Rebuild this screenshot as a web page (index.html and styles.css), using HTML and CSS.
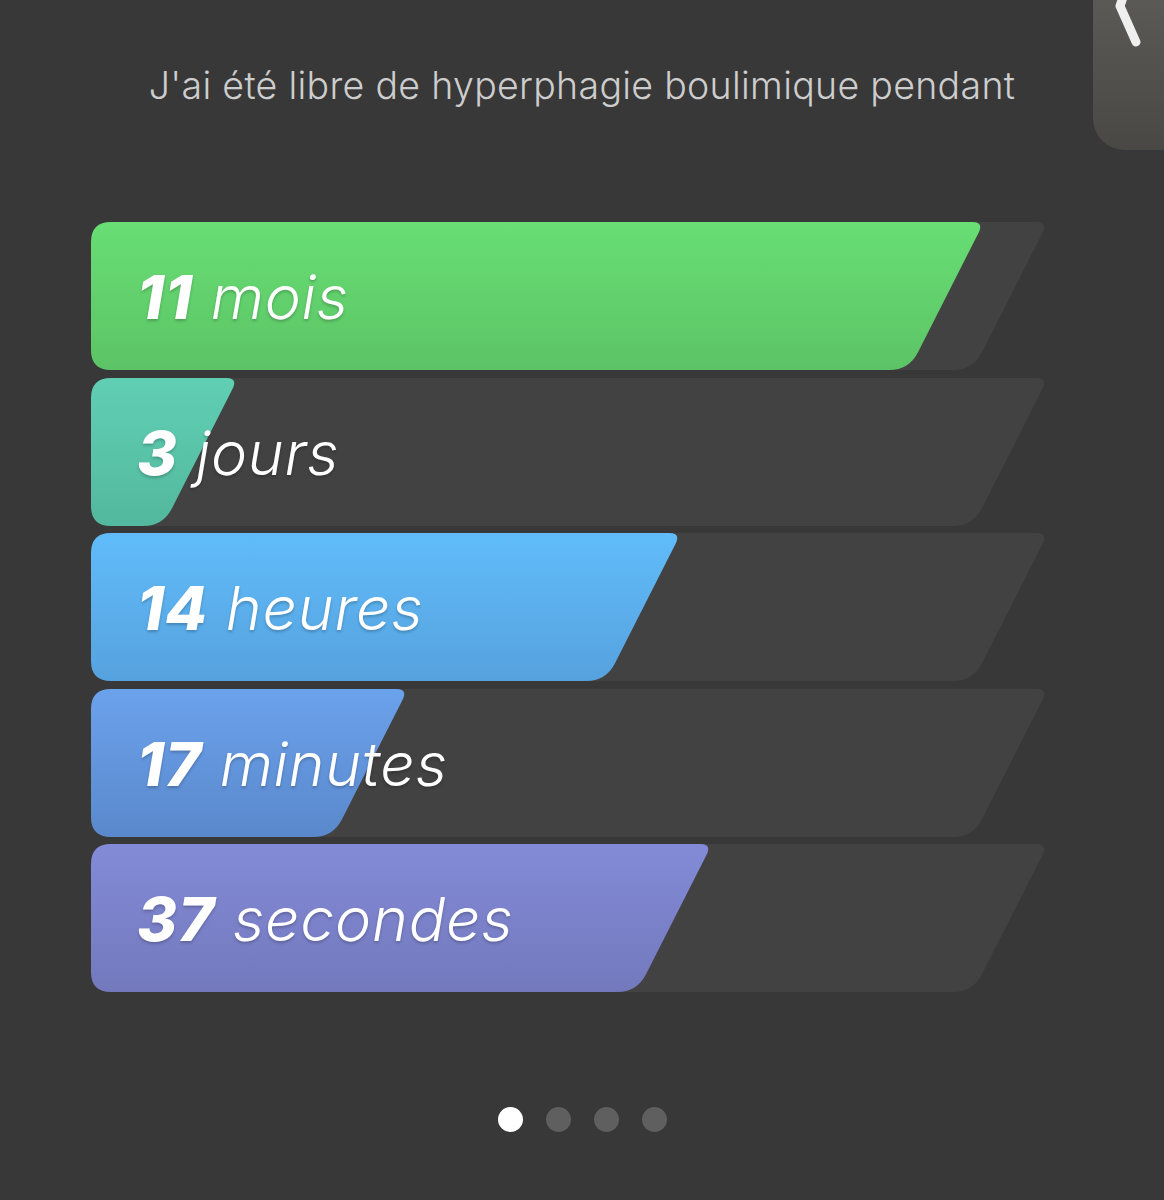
FILE: index.html
```html
<!DOCTYPE html>
<html lang="fr">
<head>
  <meta charset="UTF-8">
  <title>Compteur</title>
  <link rel="stylesheet" href="styles.css">
</head>
<body>

  <div class="tab">
    <svg width="71" height="150" viewBox="0 0 71 150">
      <path d="M34 -14 L27 6 L43 42" fill="none" stroke="#efefef" stroke-width="9" stroke-linecap="round" stroke-linejoin="round"/>
    </svg>
  </div>

  <div class="screen">
    <p class="title">J'ai été libre de hyperphagie boulimique pendant</p>

    <div class="bars">
      <div class="bar">
        <svg class="shape" viewBox="0 0 955 148">
          <defs>
            <linearGradient id="g1" x1="0" y1="0" x2="0" y2="1">
              <stop offset="0" stop-color="#68de74"/>
              <stop offset="1" stop-color="#5cc466"/>
            </linearGradient>
          </defs>
          <path class="track" d="M20 0 H945 Q957 0 951.6 10.7 L891 130.2 Q882 148 862 148 H20 Q0 148 0 128 V20 Q0 0 20 0 Z"/>
          <path fill="url(#g1)" d="M20 0 H881 Q893 0 887.6 10.7 L827 130.2 Q818 148 798 148 H20 Q0 148 0 128 V20 Q0 0 20 0 Z"/>
        </svg>
        <div class="label"><b>11</b> mois</div>
      </div>

      <div class="bar">
        <svg class="shape" viewBox="0 0 955 148">
          <defs>
            <linearGradient id="g2" x1="0" y1="0" x2="0" y2="1">
              <stop offset="0" stop-color="#60cfb4"/>
              <stop offset="1" stop-color="#53b89d"/>
            </linearGradient>
          </defs>
          <path class="track" d="M20 0 H945 Q957 0 951.6 10.7 L891 130.2 Q882 148 862 148 H20 Q0 148 0 128 V20 Q0 0 20 0 Z"/>
          <path fill="url(#g2)" d="M20 0 H135 Q147 0 141.6 10.7 L81 130.2 Q72 148 52 148 H20 Q0 148 0 128 V20 Q0 0 20 0 Z"/>
        </svg>
        <div class="label"><b>3</b> jours</div>
      </div>

      <div class="bar">
        <svg class="shape" viewBox="0 0 955 148">
          <defs>
            <linearGradient id="g3" x1="0" y1="0" x2="0" y2="1">
              <stop offset="0" stop-color="#60bcf9"/>
              <stop offset="1" stop-color="#56a2df"/>
            </linearGradient>
          </defs>
          <path class="track" d="M20 0 H945 Q957 0 951.6 10.7 L891 130.2 Q882 148 862 148 H20 Q0 148 0 128 V20 Q0 0 20 0 Z"/>
          <path fill="url(#g3)" d="M20 0 H578 Q590 0 584.6 10.7 L524 130.2 Q515 148 495 148 H20 Q0 148 0 128 V20 Q0 0 20 0 Z"/>
        </svg>
        <div class="label"><b>14</b> heures</div>
      </div>

      <div class="bar">
        <svg class="shape" viewBox="0 0 955 148">
          <defs>
            <linearGradient id="g4" x1="0" y1="0" x2="0" y2="1">
              <stop offset="0" stop-color="#6ba2ec"/>
              <stop offset="1" stop-color="#5a88cc"/>
            </linearGradient>
          </defs>
          <path class="track" d="M20 0 H945 Q957 0 951.6 10.7 L891 130.2 Q882 148 862 148 H20 Q0 148 0 128 V20 Q0 0 20 0 Z"/>
          <path fill="url(#g4)" d="M20 0 H305 Q317 0 311.6 10.7 L251 130.2 Q242 148 222 148 H20 Q0 148 0 128 V20 Q0 0 20 0 Z"/>
        </svg>
        <div class="label"><b>17</b> minutes</div>
      </div>

      <div class="bar">
        <svg class="shape" viewBox="0 0 955 148">
          <defs>
            <linearGradient id="g5" x1="0" y1="0" x2="0" y2="1">
              <stop offset="0" stop-color="#838bd8"/>
              <stop offset="1" stop-color="#7379bc"/>
            </linearGradient>
          </defs>
          <path class="track" d="M20 0 H945 Q957 0 951.6 10.7 L891 130.2 Q882 148 862 148 H20 Q0 148 0 128 V20 Q0 0 20 0 Z"/>
          <path fill="url(#g5)" d="M20 0 H609 Q621 0 615.6 10.7 L555 130.2 Q546 148 526 148 H20 Q0 148 0 128 V20 Q0 0 20 0 Z"/>
        </svg>
        <div class="label"><b>37</b> secondes</div>
      </div>
    </div>

    <div class="dots">
      <span class="dot active"></span>
      <span class="dot"></span>
      <span class="dot"></span>
      <span class="dot"></span>
    </div>
  </div>

</body>
</html>
```

FILE: styles.css
```css
body {
  margin: 0;
  padding: 0;
  background-color: #383838;
  font-family: Inter, 'Liberation Sans', sans-serif;
  height: 1200px;
  overflow: hidden;
}

.screen {
  display: flex;
  flex-direction: column;
  align-items: center;
}

.title {
  margin: 63px 0 0 0;
  height: 46px;
  line-height: 46px;
  font-size: 37.5px;
  font-weight: 300;
  color: #cdcdcd;
  letter-spacing: 0.3px;
}

.bars {
  align-self: flex-start;
  margin-top: 113px;
  margin-left: 90px;
  width: 957px;
  display: flex;
  flex-direction: column;
  gap: 7.5px;
}

.bar {
  display: grid;
  height: 148px;
}

.bar > * {
  grid-area: 1 / 1;
}

.shape {
  width: 957px;
  height: 148px;
  display: block;
  overflow: visible;
}

.track {
  fill: #424242;
}

.label {
  align-self: center;
  padding-left: 47px;
  padding-top: 2px;
  font-size: 61px;
  font-weight: 300;
  font-style: italic;
  color: #fff;
  letter-spacing: 0.7px;
  text-shadow: 0 2px 3px rgba(0, 0, 0, 0.22);
}

.label b {
  font-weight: 800;
  letter-spacing: 1px;
}

.dots {
  margin-top: 115px;
  display: flex;
  gap: 23px;
}

.dot {
  width: 25px;
  height: 25px;
  border-radius: 50%;
  background-color: #5f5f5f;
}

.dot.active {
  background-color: #fff;
}

.tab {
  position: absolute;
  top: 0;
  right: 0;
  width: 71px;
  height: 150px;
  border-bottom-left-radius: 32px;
  background: linear-gradient(180deg, #5b5955, #4a4844);
}

.tab svg {
  display: block;
}
```
